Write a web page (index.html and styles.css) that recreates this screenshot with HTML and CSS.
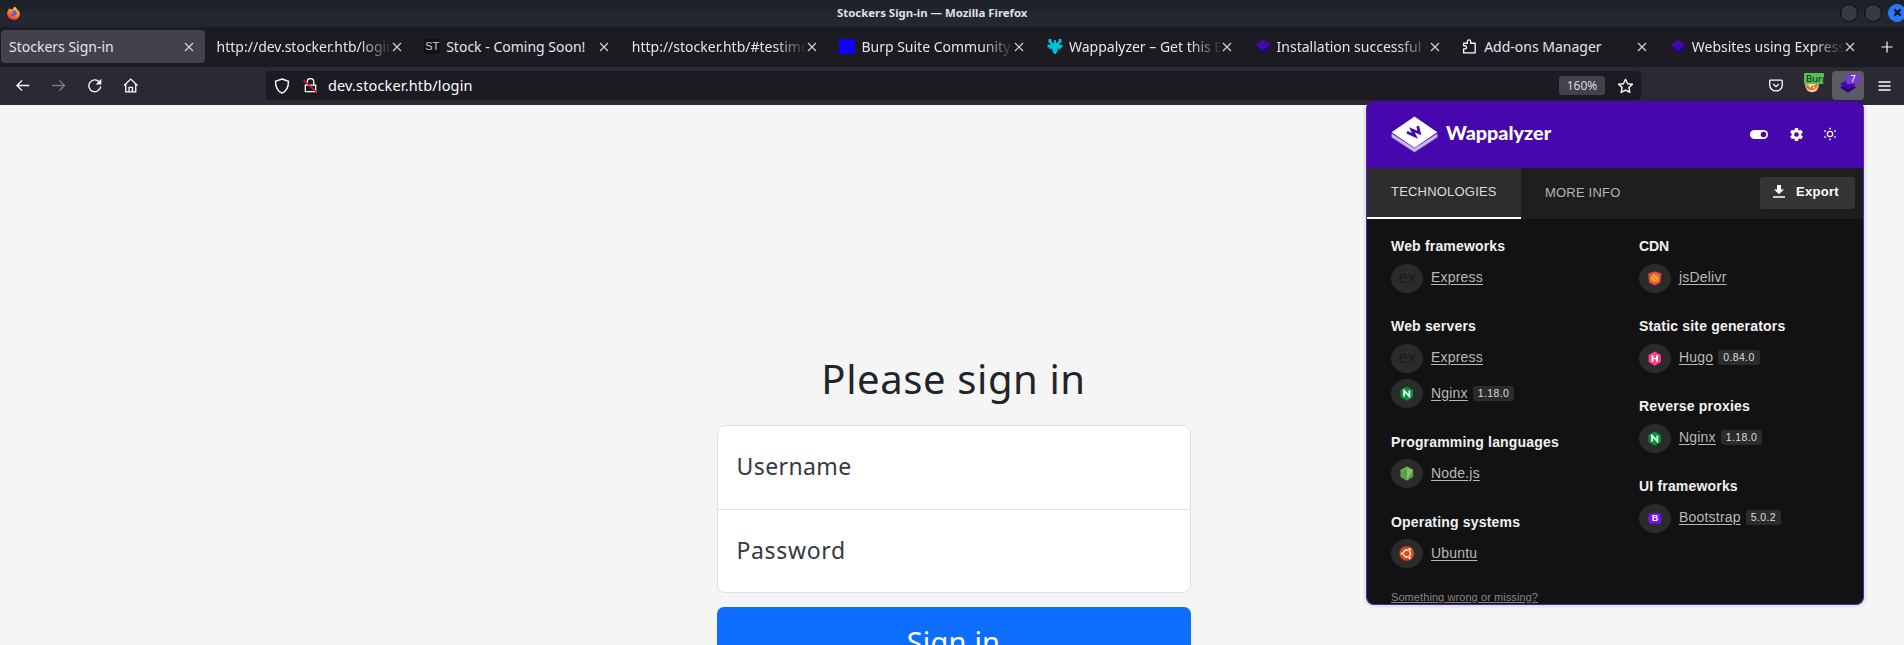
FILE: index.html
```html
<!DOCTYPE html>
<html lang="en">
<head>
<meta charset="utf-8">
<title>Stockers Sign-in</title>
<link rel="stylesheet" href="styles.css">
</head>
<body>
<svg class="defs" width="0" height="0">
  <defs>
    <symbol id="close" viewBox="0 0 10 10"><path d="M1 1l8 8M9 1l-8 8" fill="none" stroke="currentColor" stroke-width="1.1"/></symbol>
    <symbol id="layers" viewBox="0 0 16 16"><path d="M0 9.600L8 4.500l8 5.100-8 5.200z" fill="#28067a"/><path d="M0 6.300L8 .9l8 5.400-8 5.500z" fill="#4608ad"/></symbol>
    <symbol id="nginx" viewBox="0 0 16 16"><path d="M8 .5l6.600 3.800v7.500L8 15.600l-6.600-3.800V4.300z" fill="#009639"/><path d="M5.200 11.300V5l5.600 6V4.800" fill="none" stroke="#fff" stroke-width="1.900"/></symbol>
  </defs>
</svg>

<header class="browser">
  <div class="titlebar">
    <svg class="firefox" viewBox="0 0 16 16"><defs><linearGradient id="ff" x1=".8" y1="0" x2=".3" y2="1"><stop offset="0" stop-color="#ffd53e"/><stop offset=".5" stop-color="#ff8a25"/><stop offset="1" stop-color="#f0264f"/></linearGradient></defs><path d="M3 2.500l2 1.500 2-.4L9.300.6c2 1.500 2.700 2.500 3 3.800 1.700.7 3 2.600 3 5A7.200 6.400 0 0 1 .8 9.200C.6 7 1.500 5.500 2.300 4.700z" fill="url(#ff)"/><path d="M5 7.500l3-2.600c3 .2 4 2 3.500 4-1 3-5 3.200-6.500.8z" fill="#5b62d8"/><path d="M3 7c2-1.500 4-.6 5 .4L5.500 9z" fill="#ff8030"/></svg>
    <span class="window-title">Stockers Sign-in — Mozilla Firefox</span>
    <div class="window-buttons">
      <i class="wbtn"></i><i class="wbtn"></i>
      <i class="wbtn wbtn-close"><svg viewBox="0 0 10 10"><path d="M1.500 1.500l7 7M8.500 1.500l-7 7" stroke="#10151f" stroke-width="2.500"/></svg></i>
    </div>
  </div>

  <nav class="tabs">
    <div class="tab active"><span class="label">Stockers Sign-in</span><svg class="x"><use href="#close"/></svg></div>
    <div class="tab"><span class="label fade">http://dev.stocker.htb/login</span><svg class="x"><use href="#close"/></svg></div>
    <div class="tab"><b class="fav st">ST</b><span class="label">Stock - Coming Soon!</span><svg class="x"><use href="#close"/></svg></div>
    <div class="tab"><span class="label fade">http://stocker.htb/#testimo</span><svg class="x"><use href="#close"/></svg></div>
    <div class="tab"><i class="fav blue"></i><span class="label fade">Burp Suite Community E</span><svg class="x"><use href="#close"/></svg></div>
    <div class="tab"><svg class="fav" viewBox="0 0 16 16"><path d="M1 0h3v2h1v2h2V1h2v3h2V2h1V0h3v4h-2v2h3v3h-2v2h-2v-1h-1v3h-1v2H9v1H7v-1H6v-2H5v-3H4v1H2V9H0V6h3V4H1z" fill="#00c3d9"/></svg><span class="label fade">Wappalyzer – Get this E</span><svg class="x"><use href="#close"/></svg></div>
    <div class="tab"><svg class="fav"><use href="#layers"/></svg><span class="label fade">Installation successful -</span><svg class="x"><use href="#close"/></svg></div>
    <div class="tab"><svg class="fav" viewBox="0 0 16 16"><path d="M1.200 14.800V10.600h1.500a1.700 1.700 0 0 0 0-3.400H1.200V4.500h4V2.800a1.800 1.800 0 0 1 3.600 0v1.700h4.700v10.300z" fill="none" stroke="#fbfbfe" stroke-width="1.400" stroke-linejoin="round"/></svg><span class="label">Add-ons Manager</span><svg class="x"><use href="#close"/></svg></div>
    <div class="tab"><svg class="fav"><use href="#layers"/></svg><span class="label fade">Websites using Express</span><svg class="x"><use href="#close"/></svg></div>
    <svg class="plus" viewBox="0 0 12 12"><path d="M6 .5v11M.5 6h11" stroke="#fbfbfe" stroke-width="1.200"/></svg>
  </nav>

  <div class="toolbar">
    <div class="nav-icons">
      <svg viewBox="0 0 16 16"><path d="M15 8H1.800M7.300 2.500L1.800 8l5.500 5.500" class="ln"/></svg>
      <svg viewBox="0 0 16 16" class="dim"><path d="M1 8h13.200M8.700 2.500L14.200 8l-5.500 5.500" class="ln"/></svg>
      <svg viewBox="0 0 16 16"><path d="M12.600 4A6.300 6.300 0 1 0 14.300 9" class="ln"/><path d="M15 .8v6H9z" fill="#fbfbfe"/></svg>
      <svg viewBox="0 0 16 16"><path d="M.8 8L8 1.200 15.200 8M2.700 6.500v8.300h10.600V6.500M6.200 14.500V10h3.600v4.500" class="ln"/></svg>
    </div>
    <div class="urlbar">
      <svg class="shield" viewBox="0 0 16 16"><path d="M8 1l6.500 2.300c0 6-2 10-6.500 11.900C3.500 13.300 1.500 9.300 1.500 3.300z" class="ln"/></svg>
      <svg class="lock" viewBox="0 0 16 16"><path d="M2.500 7.500h11v7h-11zM4.500 7.500V4a3.500 3.500 0 0 1 7 0v3.500" class="ln"/><path d="M.5 2.300l14.500 13.200" stroke="#e2143f" stroke-width="1.700"/></svg>
      <span class="url">dev.stocker.htb/login</span>
      <span class="zoom">160%</span>
      <svg class="star" viewBox="0 0 16 16"><path d="M8 1.300l2.100 4.400 4.800.6-3.500 3.300.9 4.800L8 12.100l-4.300 2.300.9-4.800L1.100 6.300l4.800-.6z" class="ln" stroke-linejoin="round"/></svg>
    </div>
    <div class="ext-icons">
      <svg class="pocket" viewBox="0 0 16 16"><path d="M1.300 3.200q0-1 1-1h11.400q1 0 1 1v4.200a6.700 6.400 0 0 1-13.400 0zM5 6.400l3 2.800 3-2.800" class="ln"/></svg>
      <div class="burp">
        <svg viewBox="0 0 16 16"><circle cx="8" cy="8" r="7.200" fill="#eed6b5"/><path d="M2 6q6 6 12-1v4q-5 7-12 2z" fill="#ee7419"/><circle cx="6" cy="9" r="1" fill="#fff"/><circle cx="10" cy="10" r="1" fill="#fff"/></svg>
        <span class="burp-badge">Burp</span>
      </div>
      <div class="wap-btn"><svg><use href="#layers"/></svg><span class="count">7</span></div>
      <svg class="menu" viewBox="0 0 12 10"><path d="M0 1h12M0 5h12M0 9h12" stroke="#fbfbfe" stroke-width="1.300"/></svg>
    </div>
  </div>
</header>

<main class="page">
  <form class="signin">
    <h1>Please sign in</h1>
    <div class="fields">
      <label class="field user">Username</label>
      <label class="field pass">Password</label>
    </div>
    <button class="submit" type="button"><span>Sign in</span></button>
  </form>
</main>

<aside class="popup">
  <div class="p-head">
    <svg class="p-logo" viewBox="0 0 48 38"><path d="M.5 20L24 35.500 47.500 20v2.200L24 37.500.5 22.200z" fill="#a98bd8"/><path d="M.5 18L24 33 47.500 18v3L24 36.500.5 21z" fill="#c9b8e7"/><path d="M24 .5L47.500 16.700 24 32.500.5 16.700z" fill="#fff"/><path d="M16.200 16.800l8.300 3.700-3.200-6.300 7.700 3.200-1.700-7" fill="none" stroke="#4608ad" stroke-width="2.800"/></svg>
    <span class="brand">Wappalyzer</span>
    <svg class="toggle" viewBox="0 0 20 10"><rect width="20" height="10" rx="5" fill="#fff"/><circle cx="15" cy="5" r="3.100" fill="#4608ad"/></svg>
    <svg class="gear" viewBox="0 0 16 16"><path d="M6.200 1h3.600v2l1.400.8L13 2.900l1.800 3-1.700 1.200v1.800l1.700 1.200-1.800 3-1.800-.9-1.400.8v2H6.200v-2l-1.400-.8-1.800.9-1.800-3 1.700-1.200V7.100L1.200 5.900l1.800-3 1.800.9L6.200 3z" fill="#fff"/><circle cx="8" cy="8" r="2.500" fill="#4608ad"/></svg>
    <svg class="sun" viewBox="0 0 14 14"><circle cx="7" cy="7" r="2.700" fill="none" stroke="#fff" stroke-width="1.200"/><path d="M5.800 2.300L7 .3l1.200 2zM5.800 11.700l1.200 2 1.200-2zM.9 3.300l2.300.2-1.300 1.900zM13.100 3.300l-2.300.2 1.300 1.900zM.9 10.700l2.300-.2-1.300-1.900zM13.100 10.700l-2.300-.2 1.300-1.900z" fill="#fff"/></svg>
  </div>
  <div class="p-tabs">
    <span class="p-tab on">TECHNOLOGIES</span>
    <span class="p-tab">MORE INFO</span>
    <button class="export" type="button"><svg viewBox="0 0 12 13"><path d="M4 0h4v4.500h3L6 9.300 1 4.500h3z" fill="#fff"/><path d="M0 12h12" stroke="#fff" stroke-width="1.400"/></svg><span>Export</span></button>
  </div>
  <div class="p-body">
    <div class="col">
      <section><h2>Web frameworks</h2>
        <div class="tech"><i class="ic ex">ex</i><a>Express</a></div></section>
      <section><h2>Web servers</h2>
        <div class="tech"><i class="ic ex">ex</i><a>Express</a></div>
        <div class="tech"><i class="ic"><svg><use href="#nginx"/></svg></i><a>Nginx</a><span class="ver">1.18.0</span></div></section>
      <section><h2>Programming languages</h2>
        <div class="tech"><i class="ic"><svg viewBox="0 0 16 16"><path d="M8 .4l6.800 3.800v7.600L8 15.600l-6.800-3.800V4.200z" fill="#539e43"/><path d="M8 .4l6.800 3.800L8 15.600z" fill="#8abb75"/><path d="M1.200 4.200L8 .4 4 7l4 8.600z" fill="#6cae4f"/></svg></i><a>Node.js</a></div></section>
      <section><h2>Operating systems</h2>
        <div class="tech"><i class="ic"><svg viewBox="0 0 16 16"><circle cx="8" cy="8" r="7.800" fill="#dd4814"/><circle cx="8.200" cy="8" r="3.700" fill="none" stroke="#fff" stroke-width="1.500"/><g fill="#fff" stroke="#dd4814" stroke-width=".7"><circle cx="2.900" cy="8" r="1.600"/><circle cx="11" cy="3.500" r="1.600"/><circle cx="11" cy="12.500" r="1.600"/></g></svg></i><a>Ubuntu</a></div></section>
      <a class="wrong">Something wrong or missing?</a>
    </div>
    <div class="col">
      <section><h2 class="cdn">CDN</h2>
        <div class="tech"><i class="ic"><svg viewBox="0 0 16 16"><path d="M8 .5l7 2.200-1 9.500L8 15.500l-6-3.300-1-9.500z" fill="#e84d3d"/><circle cx="8" cy="7.800" r="4.300" fill="#f9b02e"/><path d="M5 5l6 6M4 9l3 2.500M8 4l3.500 3" stroke="#e27a25" stroke-width="1.100"/></svg></i><a>jsDelivr</a></div></section>
      <section><h2>Static site generators</h2>
        <div class="tech"><i class="ic"><svg viewBox="0 0 16 16"><path d="M8 .5l6.600 3.800v7.500L8 15.600l-6.600-3.800V4.300z" fill="#ff4088"/><path d="M5.500 4.500v7M10.500 4.500v7M5.500 8h5" stroke="#fff" stroke-width="1.800"/></svg></i><a>Hugo</a><span class="ver">0.84.0</span></div></section>
      <section><h2>Reverse proxies</h2>
        <div class="tech"><i class="ic"><svg><use href="#nginx"/></svg></i><a>Nginx</a><span class="ver">1.18.0</span></div></section>
      <section><h2>UI frameworks</h2>
        <div class="tech"><i class="ic bs"><svg viewBox="0 0 16 16"><path d="M1.800 2.500h12.400V6L15.700 8l-1.500 2v3.500H1.800V10L.3 8l1.500-2z" fill="#7511f7"/></svg><b>B</b></i><a>Bootstrap</a><span class="ver">5.0.2</span></div></section>
    </div>
  </div>
</aside>
</body>
</html>
```

FILE: styles.css
```css
* { box-sizing: border-box; }
body { margin: 0; height: 645px; overflow: hidden; background: #f5f5f5; font-family: "Noto Sans", sans-serif; }
svg { display: block; flex: none; }
.defs { position: absolute; }
.ln { fill: none; stroke: #fbfbfe; stroke-width: 1.4; }

/* Window frame */
.titlebar { height: 27px; display: grid; grid-template-columns: 837px auto 1fr; align-items: center; background: linear-gradient(#1d2028, #23272f 60%); overflow: hidden; }
.firefox { width: 15px; height: 14px; margin: -2px 0 0 6px; }
.window-title { color: #dfe1e4; font-size: 11.400px; font-weight: 700; line-height: 24px; margin-top: -2px; }
.window-buttons { justify-self: end; display: flex; gap: 6px; margin: -2px -2px 0 0; }
.wbtn { width: 18px; height: 18px; border-radius: 50%; background: #343a46; border: 1px solid #0a0c10; }
.wbtn-close { background: #2777ff; border-color: #2777ff; display: flex; align-items: center; justify-content: center; }
.wbtn-close svg { width: 9px; height: 9px; }

/* Tab strip */
.tabs { height: 40px; background: #1c1b22; display: flex; padding: 3px 0 0 1px; overflow: hidden; }
.tab { flex: none; width: 204px; margin-right: 3.600px; height: 33px; border-radius: 4px; padding: 0 11px 0 8px; display: flex; align-items: center; color: #fbfbfe; }
.tab.active { background: #42414d; }
.label { flex: 1; min-width: 0; overflow: hidden; white-space: nowrap; font-size: 14px; line-height: 24px; margin-top: 1px; color: #e4e4e9; }
.fade { -webkit-mask-image: linear-gradient(to right, #000 calc(100% - 32px), transparent); mask-image: linear-gradient(to right, #000 calc(100% - 32px), transparent); }
.x { width: 10px; height: 10px; color: #d8d8de; }
.fav { width: 16px; height: 15px; margin-right: 6px; flex: none; }
.blue { background: #1000ff; }
.st { background: #101113; color: #ccc; font: 400 11px/15px "Liberation Sans", sans-serif; text-align: center; }
.plus { width: 12px; height: 12px; margin: 11px 0 0 12px; }

/* Navigation toolbar */
.toolbar { height: 38px; background: #2b2a33; display: flex; padding-top: 4px; }
.nav-icons { width: 266px; display: flex; gap: 20.500px; padding: 7px 0 0 15px; }
.nav-icons svg { width: 15.500px; height: 15px; }
.dim { opacity: .4; }
.urlbar { width: 1375px; height: 29px; border-radius: 4px; background: #1c1b22; display: flex; align-items: center; padding: 0 7px 0 8px; }
.shield { width: 16px; height: 16px; }
.lock { width: 15px; height: 15px; margin-left: 13px; }
.url { flex: 1; margin: -1px 0 0 10px; color: #fbfbfe; font-size: 14.500px; line-height: 24px; letter-spacing: .15px; }
.zoom { width: 46px; height: 19px; background: #42414d; border-radius: 3px; color: #d9d9de; font-size: 12px; line-height: 20px; text-align: center; }
.star { width: 17px; height: 16px; margin-left: 12px; }
.ext-icons { flex: 1; display: flex; height: 29px; align-items: center; }
.pocket { width: 16px; height: 15px; margin-left: 127px; }
.burp { position: relative; margin-left: 20px; width: 16px; height: 15px; }
.burp svg { width: 16px; height: 15px; }
.burp-badge { position: absolute; left: 0; top: -5px; width: 20px; height: 11px; padding-left: 2px; overflow: hidden; border-radius: 1px; background: #58bf55; color: #10240f; font-size: 9.500px; line-height: 11px; }
.wap-btn { position: relative; margin-left: 12px; width: 32px; height: 29px; border-radius: 4px; background: #5b5b66; display: flex; align-items: center; justify-content: center; }
.wap-btn svg { width: 16px; height: 16px; }
.count { position: absolute; left: 14px; top: 3px; width: 14px; height: 10px; background: #743ccc; border-radius: 2px; color: #fff; font-size: 9px; line-height: 10px; text-align: center; }
.menu { width: 13px; height: 10px; margin-left: 14px; }

/* Sign-in page */
.page { height: 540px; overflow: hidden; }
.signin { width: 474px; margin-left: 716.500px; padding-top: 247px; }
h1 { margin: 0; color: #212529; font-size: 40px; font-weight: 400; line-height: 54px; letter-spacing: .6px; text-align: center; }
.fields { margin-top: 19px; height: 168px; background: #fff; border: 1px solid #dee2e6; border-radius: 8px; display: grid; grid-template-rows: 1fr 1fr; }
.field { display: flex; align-items: center; padding: 0 0 3px 19px; font-size: 23px; color: #343a40; }
.user { letter-spacing: .4px; }
.pass { border-top: 1px solid #dee2e6; letter-spacing: .65px; }
.submit { display: block; width: 474px; height: 78px; margin-top: 14px; border: 0; border-radius: 7px; background: #0d6efd; color: #fff; font: 29px/70px "Noto Sans", sans-serif; letter-spacing: .2px; padding: 0 0 8px; }

/* Technology popup */
.popup { position: absolute; left: 1366px; top: 100.500px; width: 498px; height: 504px; border: 1px solid #5b21b6; border-top: 0; border-radius: 8px; background: #121212; overflow: hidden; box-shadow: 0 0 5px rgba(0,0,0,.2); font-family: "Liberation Sans", Arial, sans-serif; }
.p-head { height: 67px; background: #4608ad; display: flex; align-items: center; padding-left: 24px; }
.p-logo { width: 47px; height: 37px; }
.brand { flex: 1; margin: -4px 0 0 8px; color: #fff; font: 900 19.800px/24px Lato, sans-serif; }
.toggle { width: 20px; height: 9px; margin-right: 20px; }
.gear { width: 15px; height: 15px; margin-right: 19px; }
.sun { width: 14px; height: 14px; margin-right: 26px; }
.p-tabs { height: 51px; background: #1e1e1e; display: flex; align-items: stretch; }
.p-tab { color: #b5b5b5; font-size: 13px; line-height: 50px; padding: 0 0 0 24px; letter-spacing: .2px; }
.p-tab.on { width: 154px; color: #ddd; line-height: 48px; background: #2d2d2d; border-bottom: 2px solid #fff; }
.export { margin: 9px 8px 0 auto; width: 95px; height: 32px; border: 0; border-radius: 3px; background: #353535; color: #fff; display: flex; align-items: center; padding: 0 0 2px 13px; font: 700 13px/30px "Liberation Sans", sans-serif; letter-spacing: .3px; }
.export svg { width: 12px; height: 13px; margin: -1px 11px 0 0; }
.p-body { display: grid; grid-template-columns: 248px 1fr; padding: 17.500px 0 0 24px; }
section { margin-bottom: 20.300px; }
h2 { margin: 0 0 4.300px; color: #f2f2f2; font-size: 14px; line-height: 20px; letter-spacing: .18px; }
.cdn { letter-spacing: -.1px; }
.tech { height: 35.500px; display: flex; align-items: center; }
.ic { flex: none; width: 32px; height: 29px; border-radius: 50%; background: #2b2b2b; display: flex; align-items: center; justify-content: center; font-style: normal; }
.ic svg { width: 15.500px; height: 15px; }
.ex { color: #111; font: 300 17px/26px Lato, sans-serif; padding-bottom: 2px; }
.bs { position: relative; }
.bs b { position: absolute; inset: 0; text-align: center; font-size: 9px; line-height: 29px; color: #fff; }
.tech a { margin: -2px 0 0 8px; color: #b9b9b9; font-size: 14px; line-height: 18px; letter-spacing: .2px; text-decoration: underline; text-underline-offset: 2px; }
.ver { margin: -1px 0 0 5px; padding: 0 5px; height: 15px; border-radius: 3px; background: #2b2b2b; color: #ddd; font-size: 10.500px; line-height: 14px; letter-spacing: .35px; }
.wrong { display: block; margin-top: -2px; color: #858585; font-size: 11px; line-height: 14px; letter-spacing: .08px; text-decoration: underline; white-space: nowrap; }
```
